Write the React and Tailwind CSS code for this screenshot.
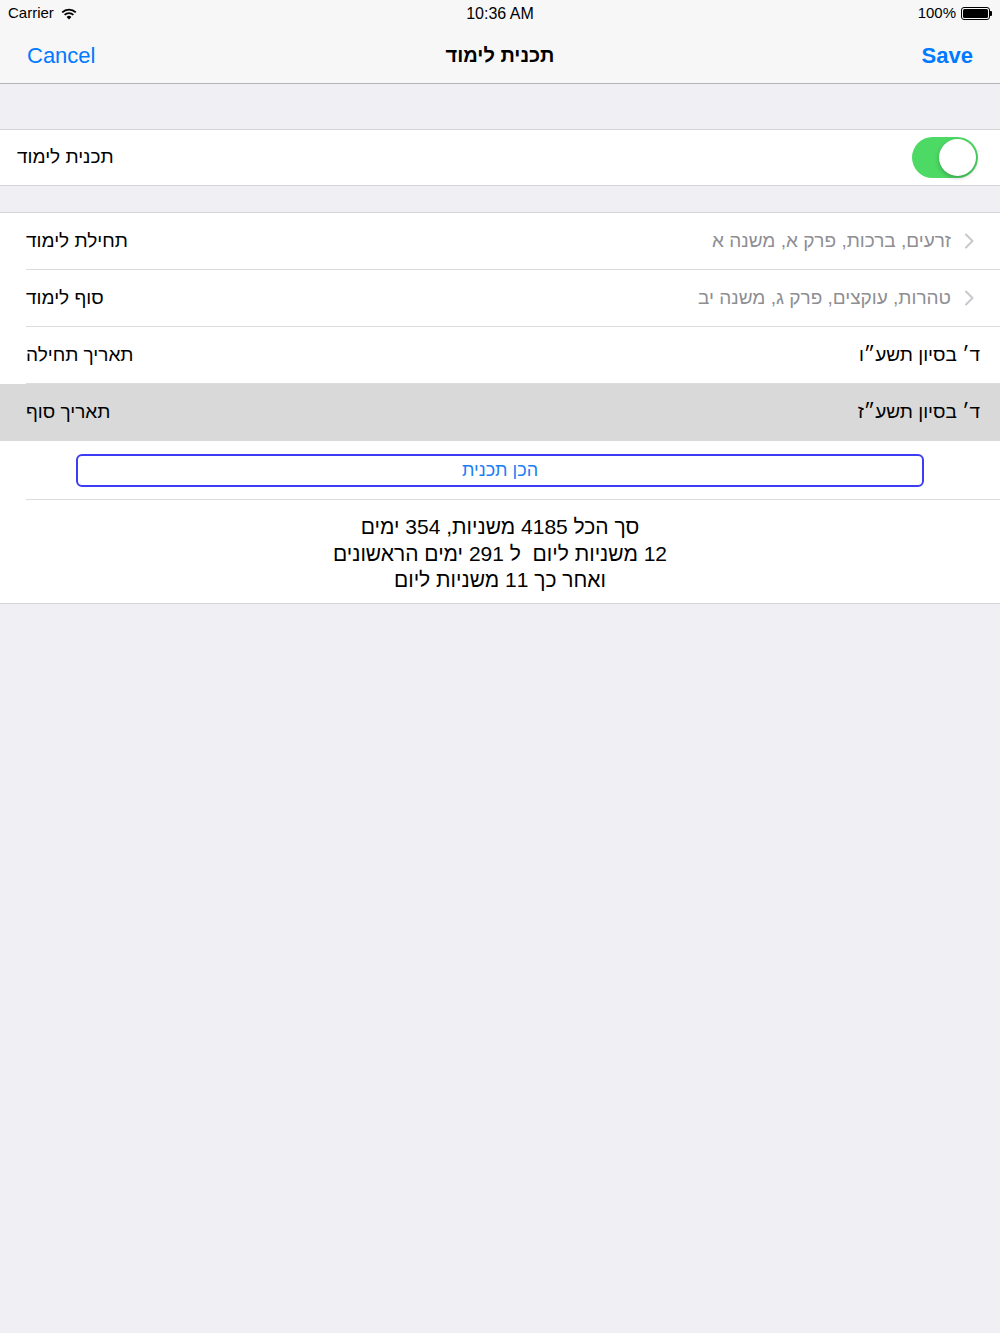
import React from "react";

const font = { fontFamily: '"Liberation Sans", "DejaVu Sans", Arial, sans-serif' };

// chevron used in the disclosure rows
const Chevron = () => (
  <svg width="10" height="16" viewBox="0 0 10 16" className="ml-[13px] mr-[26px]">
    <path d="M2 1.5 L8.5 8 L2 14.5" fill="none" stroke="#c7c7cc" strokeWidth="2" strokeLinecap="round" strokeLinejoin="round" />
  </svg>
);

const Wifi = () => (
  <svg width="16" height="12" viewBox="0 0 16 12" className="ml-[7px]">
    <path d="M8 11.5 L5.6 8.9 A3.4 3.4 0 0 1 10.4 8.9 Z" fill="#000" />
    <path d="M3.6 6.9 A6.2 6.2 0 0 1 12.4 6.9" fill="none" stroke="#000" strokeWidth="1.8" />
    <path d="M1.2 4.4 A9.6 9.6 0 0 1 14.8 4.4" fill="none" stroke="#000" strokeWidth="1.8" />
  </svg>
);

const Battery = () => (
  <div className="flex items-center ml-[5px]">
    <div className="w-[29px] h-[13px] rounded-[3px] border border-black p-[1px]">
      <div className="w-full h-full bg-black rounded-[1.5px]" />
    </div>
    <div className="w-[2px] h-[5px] bg-black rounded-r-[1px]" />
  </div>
);

const Row = ({ label, value, chevron, muted, selected, separator = true }) => (
  <div className={`flex ${selected ? "bg-[#d9d9d9]" : "bg-white"}`}>
    <div
      className={`flex-1 flex items-center h-[57px] ${
        separator ? "border-b border-[#dcdce0] ml-[26px]" : "pl-[26px]"
      }`}
    >
      <span dir="rtl" className="text-[19px] text-black">
        {label}
      </span>
      <div className="flex-1" />
      <span dir="rtl" className={`text-[19px] ${muted ? "text-[#8e8e93]" : "text-black"} ${chevron ? "" : "mr-[20px]"}`}>
        {value}
      </span>
      {chevron && <Chevron />}
    </div>
  </div>
);

export default function App() {
  return (
    <div className="min-h-[1333px] bg-[#efeff4]" style={font}>
      {/* status + nav bar */}
      <div className="bg-[#f7f7f8] border-b border-[#b4b4b8]">
        <div className="h-[27px] flex items-center px-[8px] text-[15px] text-black relative">
          <span>Carrier</span>
          <Wifi />
          <span className="absolute left-1/2 -translate-x-1/2 text-[16px]">10:36 AM</span>
          <div className="flex-1" />
          <span>100%</span>
          <Battery />
        </div>
        <div className="h-[56px] flex items-center px-[27px] relative">
          <span className="text-[22px] text-[#007aff]">Cancel</span>
          <span dir="rtl" className="absolute left-1/2 -translate-x-1/2 text-[20px] font-bold text-black">
            תכנית לימוד
          </span>
          <div className="flex-1" />
          <span className="text-[22px] font-semibold text-[#007aff]">Save</span>
        </div>
      </div>

      <div className="h-[45px]" />

      {/* toggle group */}
      <div className="bg-white border-y border-[#d4d4d8] h-[57px] flex items-center pl-[17px] pr-[22px]">
        <span dir="rtl" className="text-[19px] text-black">
          תכנית לימוד
        </span>
        <div className="flex-1" />
        <div className="w-[66px] h-[41px] rounded-full bg-[#4cd964] flex items-center justify-end p-[2px]">
          <div className="w-[37px] h-[37px] rounded-full bg-white shadow-[0_2px_4px_rgba(0,0,0,0.25)]" />
        </div>
      </div>

      <div className="h-[26px]" />

      {/* plan settings group */}
      <div className="border-t border-[#d4d4d8]">
        <Row label="תחילת לימוד" value="זרעים, ברכות, פרק א, משנה א" chevron muted />
        <Row label="סוף לימוד" value="טהרות, עוקצים, פרק ג, משנה יב" chevron muted />
        <Row label="תאריך תחילה" value="ד׳ בסיון תשע״ו" />
        <Row label="תאריך סוף" value="ד׳ בסיון תשע״ז" selected separator={false} />

        <div className="bg-white">
          <div className="ml-[26px] border-b border-[#dcdce0] h-[59px] flex items-center">
            <button
              dir="rtl"
              className="ml-[50px] w-[848px] h-[33px] rounded-[6px] border-2 border-[#3c3cf5] text-[18px] text-[#1a7ef5] bg-white"
            >
              הכן תכנית
            </button>
          </div>
          <div className="border-b border-[#d4d4d8] h-[104px] pt-[14px] flex flex-col items-center text-[21px] leading-[26.5px] text-black">
            <p dir="rtl">סך הכל 4185 משניות, 354 ימים</p>
            <p dir="rtl" className="whitespace-pre">12 משניות ליום  ל 291 ימים הראשונים</p>
            <p dir="rtl">ואחר כך 11 משניות ליום</p>
          </div>
        </div>
      </div>
    </div>
  );
}
